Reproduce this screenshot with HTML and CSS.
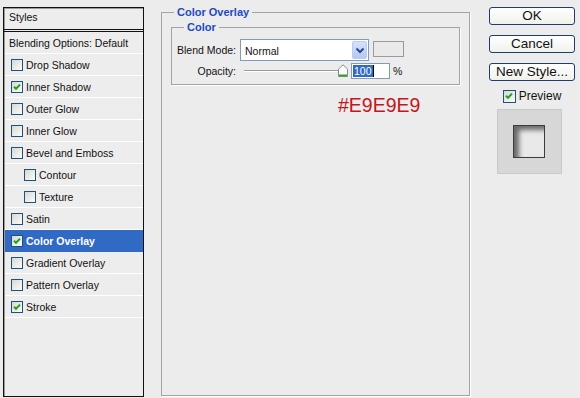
FILE: index.html
```html
<!DOCTYPE html>
<html lang="en">
<head>
  <meta charset="UTF-8">
  <title>Layer Style</title>
  <link rel="stylesheet" href="styles.css">
</head>
<body>
  <div class="dialog">
    <div class="style-list">
      <div class="list-head">Styles</div>
      <div class="list-item blend">Blending Options: Default</div>
      <div class="list-item"><span class="cb"></span>Drop Shadow</div>
      <div class="list-item"><span class="cb on"></span>Inner Shadow</div>
      <div class="list-item"><span class="cb"></span>Outer Glow</div>
      <div class="list-item"><span class="cb"></span>Inner Glow</div>
      <div class="list-item"><span class="cb"></span>Bevel and Emboss</div>
      <div class="list-item sub"><span class="cb"></span>Contour</div>
      <div class="list-item sub"><span class="cb"></span>Texture</div>
      <div class="list-item"><span class="cb"></span>Satin</div>
      <div class="list-item active"><span class="cb on"></span>Color Overlay</div>
      <div class="list-item"><span class="cb"></span>Gradient Overlay</div>
      <div class="list-item"><span class="cb"></span>Pattern Overlay</div>
      <div class="list-item"><span class="cb on"></span>Stroke</div>
    </div>

    <div class="settings">
      <fieldset class="group outer">
        <legend>Color Overlay</legend>
        <fieldset class="group inner">
          <legend>Color</legend>
          <div class="field-row">
            <span class="label">Blend Mode:</span>
            <div class="select">
              <span class="select-text">Normal</span>
              <span class="select-btn">
                <svg width="10" height="7" viewBox="0 0 10 7"><path d="M1.5 1.5 L5 5 L8.5 1.5" fill="none" stroke="#2b4a8c" stroke-width="2"/></svg>
              </span>
            </div>
            <span class="swatch"></span>
          </div>
          <div class="field-row opacity">
            <span class="label">Opacity:</span>
            <div class="slider">
              <span class="track"></span>
              <svg class="thumb" width="10" height="13" viewBox="0 0 10 13"><path d="M0.5 12.5 V5 L5 0.8 L9.5 5 V12.5 Z" fill="#fbfbf8" stroke="#8a8a8a"/><path d="M1 11.5 H9" stroke="#2fa33a" stroke-width="2"/></svg>
            </div>
            <span class="num"><span class="num-sel">100</span><span class="caret"></span></span>
            <span class="pct">%</span>
          </div>
        </fieldset>
        <div class="hex">#E9E9E9</div>
      </fieldset>
    </div>

    <div class="actions">
      <button class="btn">OK</button>
      <button class="btn">Cancel</button>
      <button class="btn">New Style...</button>
      <div class="preview-check"><span class="cb on"></span>Preview</div>
      <div class="preview-box"><div class="preview-square"></div></div>
    </div>
  </div>
</body>
</html>
```

FILE: styles.css
```css
html, body {
  margin: 0;
  padding: 0;
  background: #ececec;
  overflow: hidden;
}

.dialog {
  display: flex;
  width: 580px;
  height: 398px;
  font-family: "Liberation Sans", Arial, sans-serif;
  font-size: 10.5px;
  color: #111;
}

/* left list of effects */
.style-list {
  box-sizing: border-box;
  width: 141px;
  height: 390px;
  margin: 7px 0 0 3px;
  border: 1px solid #111;
  box-shadow: inset 1px 1px 0 #9a9a9a;
  background: #ededed;
  display: flex;
  flex-direction: column;
}

.list-head {
  height: 21px;
  line-height: 19px;
  padding-left: 5px;
  border-bottom: 3px double #111;
}

.list-item {
  display: flex;
  align-items: center;
  height: 21px;
  padding-left: 6px;
  border-bottom: 1px solid #fff;
  margin-left: 1px;
}

.list-item.blend {
  padding-left: 4px;
}

.list-item.sub {
  padding-left: 19px;
}

.list-item.active {
  background: #316ac5;
  color: #fff;
  font-weight: bold;
  border-bottom-color: #316ac5;
}

.cb {
  box-sizing: border-box;
  width: 12px;
  height: 12px;
  margin-right: 3px;
  border: 1px solid #1c5180;
  background: linear-gradient(135deg, #d8d8d2, #fbfbf9);
  flex: none;
}

.cb.on {
  background: url("data:image/svg+xml;utf8,<svg xmlns='http://www.w3.org/2000/svg' width='10' height='10' viewBox='0 0 10 10'><path d='M2 4.8 L4 6.8 L8 2.6' fill='none' stroke='%2321a121' stroke-width='2'/></svg>") center / 10px 10px no-repeat,
    linear-gradient(135deg, #d8d8d2, #fbfbf9);
}

/* main settings */
.settings {
  margin-left: 17px;
}

.group {
  border: 1px solid #a3a3a3;
  box-shadow: 1px 1px 0 #fff;
  margin: 0;
}

.group legend {
  color: #1d49c4;
  font-weight: bold;
  font-size: 11px;
  line-height: 12px;
  padding: 0 3px;
}

.outer {
  box-sizing: border-box;
  width: 309px;
  height: 390px;
  margin-top: 6px;
  padding: 0 9px;
}

.outer > legend {
  margin-left: 3px;
}

.inner {
  margin-top: 3px;
  padding: 0 0 5px 4px;
}

.inner > legend {
  margin-left: 8px;
}

.field-row {
  display: flex;
  align-items: center;
  margin-top: 6px;
}

.field-row.opacity {
  margin-top: 2px;
  height: 16px;
}

.label {
  width: 60px;
  text-align: right;
  margin-right: 4px;
}

.select {
  box-sizing: border-box;
  width: 129px;
  height: 22px;
  border: 1px solid #7f9db9;
  background: #fff;
  display: flex;
  align-items: center;
  justify-content: space-between;
  padding: 1px;
}

.select-text {
  padding-left: 3px;
  padding-top: 2px;
}

.select-btn {
  width: 15px;
  height: 18px;
  border-radius: 2px;
  background: linear-gradient(#d6e2fb, #b4c8f4);
  border: 1px solid #b9cbf2;
  box-sizing: border-box;
  display: flex;
  align-items: center;
  justify-content: center;
}

.swatch {
  box-sizing: border-box;
  width: 31px;
  height: 16px;
  margin-left: 4px;
  margin-top: -2px;
  border: 1px solid #9a9a9a;
  background: #e9e9e9;
}

.slider {
  position: relative;
  width: 104px;
  height: 16px;
  margin-left: 4px;
}

.track {
  position: absolute;
  left: 0;
  right: 8px;
  top: 7px;
  height: 1px;
  background: #9a9a9a;
  border-bottom: 1px solid #fff;
}

.thumb {
  position: absolute;
  left: 94px;
  top: 1px;
}

.num {
  box-sizing: border-box;
  width: 39px;
  height: 16px;
  margin-left: 3px;
  border: 1px solid #7f9db9;
  background: #fff;
  display: flex;
  align-items: center;
  padding-left: 1px;
}

.num-sel {
  background: #316ac5;
  color: #fff;
  line-height: 12px;
  padding: 0 1px;
}

.caret {
  width: 1px;
  height: 12px;
  background: #000;
}

.pct {
  margin-left: 3px;
}

.hex {
  margin: 9px 0 0 167px;
  font-family: "Liberation Sans", Arial, sans-serif;
  font-size: 19.5px;
  color: #c5161c;
}

/* right buttons */
.actions {
  margin-left: 19px;
  width: 86px;
  display: flex;
  flex-direction: column;
  align-items: center;
  padding-top: 7px;
}

.btn {
  box-sizing: border-box;
  width: 86px;
  height: 18px;
  margin-bottom: 10px;
  border: 1px solid #1d3e6e;
  border-radius: 3px;
  background: linear-gradient(#ffffff, #f1f1ec);
  font-family: "Liberation Sans", Arial, sans-serif;
  font-size: 13.5px;
  line-height: 14px;
  padding: 0;
  color: #111;
}

.preview-check {
  display: flex;
  align-items: center;
  margin-top: -2px;
  font-size: 12px;
}

.preview-check .cb {
  width: 13px;
  height: 13px;
}

.preview-box {
  box-sizing: border-box;
  width: 65px;
  height: 65px;
  margin-top: 6px;
  margin-left: -6px;
  background: #d7d7d7;
  border: 1px solid #c9c9c9;
  display: flex;
  align-items: center;
  justify-content: center;
}

.preview-square {
  box-sizing: border-box;
  width: 32px;
  height: 33px;
  background: #e9e9e9;
  border: 1px solid #3c3c3c;
  box-shadow: inset 5px 4px 5px rgba(0, 0, 0, 0.55);
}
```
